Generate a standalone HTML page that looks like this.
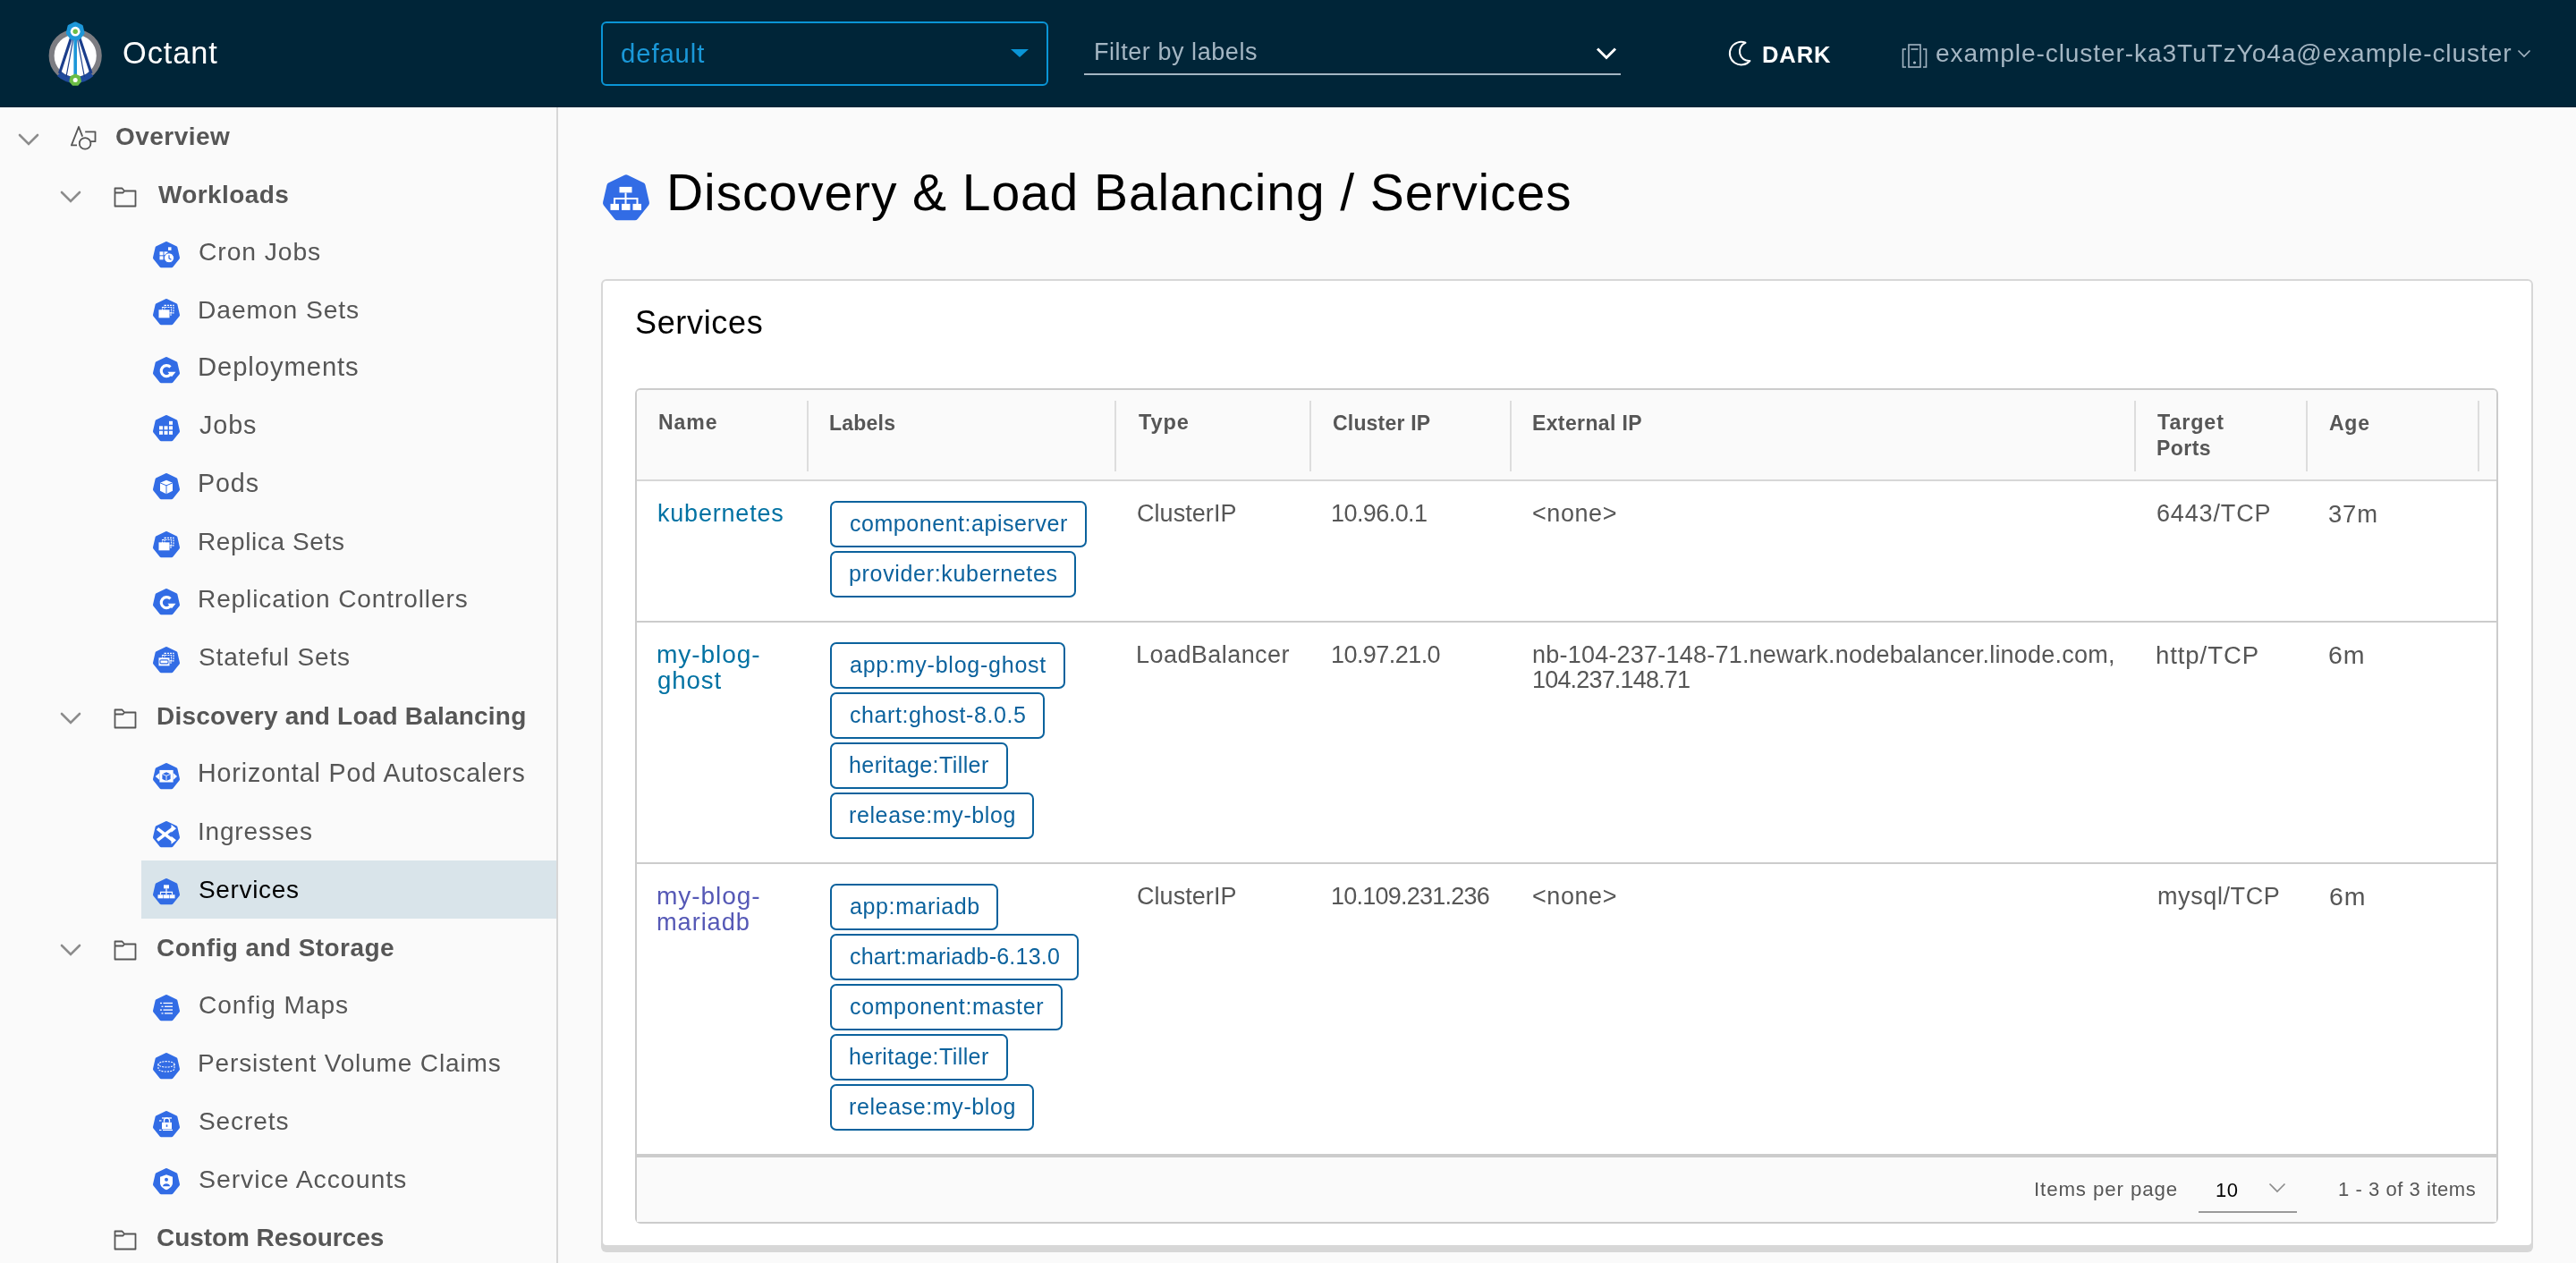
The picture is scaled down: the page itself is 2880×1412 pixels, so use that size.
<!DOCTYPE html>
<html><head><meta charset="utf-8"><title>Octant</title>
<style>
html,body{margin:0;padding:0;}
body{width:2880px;height:1412px;overflow:hidden;position:relative;background:#fafafa;font-family:"Liberation Sans",sans-serif;}
.t{position:absolute;white-space:nowrap;will-change:transform;}
svg{overflow:visible}
@media (max-width:2000px){html{zoom:0.5}}
</style></head><body>
<div style="position:absolute;left:0px;top:0px;width:2880px;height:120px;background:#002538"></div>
<svg style="position:absolute;left:54px;top:22px" width="60" height="76" viewBox="0 0 60 76">
<circle cx="30.2" cy="40.3" r="26.6" fill="#fff" stroke="#7d7d82" stroke-width="6"/>
<path d="M 12.2 60.5 A 26.6 26.6 0 0 0 48.2 60.5" fill="none" stroke="#1f4a9c" stroke-width="6.5"/>
<line x1="27" y1="16" x2="12.5" y2="60" stroke="#1b3e8c" stroke-width="3.2"/>
<line x1="33.4" y1="16" x2="48" y2="60" stroke="#1b3e8c" stroke-width="3.2"/>
<line x1="28.5" y1="18" x2="20" y2="64" stroke="#1b3e8c" stroke-width="1.2"/>
<line x1="31.9" y1="18" x2="40.4" y2="64" stroke="#1b3e8c" stroke-width="1.2"/>
<line x1="30.2" y1="14" x2="30.2" y2="66" stroke="#1d97d8" stroke-width="3.6"/>
<polygon points="30.20,4.40 36.92,7.64 38.58,14.91 33.93,20.75 26.47,20.75 21.82,14.91 23.48,7.64" fill="#1d97d8" stroke="#1d97d8" stroke-width="4" stroke-linejoin="round"/>
<circle cx="30.2" cy="13.2" r="5.4" fill="#fff"/>
<circle cx="30.2" cy="13.2" r="2.7" fill="#6bbd45"/>
<polygon points="30.20,62.10 34.42,64.13 35.46,68.70 32.54,72.37 27.86,72.37 24.94,68.70 25.98,64.13" fill="#6bbd45" stroke="#6bbd45" stroke-width="3" stroke-linejoin="round"/>
<circle cx="30.2" cy="67.5" r="2.5" fill="#fff"/>
</svg>
<div class="t" style="left:137.45px;top:42.41px;font-size:34.37px;line-height:34.37px;color:#ffffff;letter-spacing:0.9px;">Octant</div>
<div style="position:absolute;left:672px;top:24px;width:500px;height:72px;box-sizing:border-box;border:2px solid #0a95d6;border-radius:6px"></div>
<div class="t" style="left:693.83px;top:45.19px;font-size:29.31px;line-height:29.31px;color:#1a98d8;letter-spacing:0.9px;">default</div>
<svg style="position:absolute;left:1128px;top:53px" width="24" height="13" viewBox="0 0 24 13"><polygon points="2,2 22,2 12,11" fill="#0a95d6"/></svg>
<div class="t" style="left:1223.24px;top:45.04px;font-size:27px;line-height:27px;color:#a4b6c3;letter-spacing:0.559px;">Filter by labels</div>
<div style="position:absolute;left:1212px;top:82px;width:600px;height:2px;background:#a4b6c3"></div>
<svg style="position:absolute;left:1782px;top:50px" width="28" height="20" viewBox="0 0 28 20"><polyline points="4,4.5 14,14.5 24,4.5" fill="none" stroke="#fff" stroke-width="3"/></svg>
<svg style="position:absolute;left:1930px;top:44px" width="30" height="32" viewBox="0 0 30 32"><path d="M 21.5 3.8 A 12.8 12.8 0 1 0 26.4 24 A 10.5 10.5 0 0 1 21.5 3.8 Z" fill="none" stroke="#fff" stroke-width="2" stroke-linejoin="round"/></svg>
<div class="t" style="left:1970.34px;top:49.14px;font-size:25.59px;line-height:25.59px;color:#ffffff;font-weight:700;letter-spacing:0.9px;">DARK</div>
<svg style="position:absolute;left:2126px;top:48.5px" width="29" height="28" viewBox="0 0 29 28"><rect x="8" y="1" width="13" height="25" fill="none" stroke="#a4b6c3" stroke-width="1.6"/>
<line x1="10.5" y1="6" x2="18.5" y2="6" stroke="#a4b6c3" stroke-width="1.6"/>
<circle cx="14.5" cy="21" r="1.6" fill="#a4b6c3"/>
<polyline points="5,6 1.5,6 1.5,26 5,26" fill="none" stroke="#a4b6c3" stroke-width="1.6"/>
<polyline points="24,6 27.5,6 27.5,26 24,26" fill="none" stroke="#a4b6c3" stroke-width="1.6"/></svg>
<div class="t" style="left:2163.88px;top:46.21px;font-size:28.1px;line-height:28.1px;color:#a4b6c3;letter-spacing:0.9px;">example-cluster-ka3TuTzYo4a@example-cluster</div>
<svg style="position:absolute;left:2813px;top:54px" width="18" height="12" viewBox="0 0 18 12"><polyline points="2.5,2.5 9,9 15.5,2.5" fill="none" stroke="#a4b6c3" stroke-width="1.6"/></svg>
<div style="position:absolute;left:0px;top:120px;width:622px;height:1292px;background:#fafafa"></div>
<div style="position:absolute;left:622px;top:120px;width:2px;height:1292px;background:#d7d7d7"></div>
<div style="position:absolute;left:158px;top:962.4px;width:464px;height:64.8px;background:#d9e4ea"></div>
<svg style="position:absolute;left:19px;top:146.8px" width="26" height="18" viewBox="0 0 26 18"><polyline points="3,4 13,14 23,4" fill="none" stroke="#8c8c8c" stroke-width="2.6" stroke-linecap="round"/></svg>
<svg style="position:absolute;left:77px;top:140.4px" width="34" height="32" viewBox="0 0 34 32"><path d="M9 22.4 L2.9 22.4 L11 1.8 L15.2 12.6" fill="none" stroke="#565656" stroke-width="1.8" stroke-linejoin="round"/><polyline points="18.2,7.3 29.5,7.3 29.5,18.2 24.8,18.2" fill="none" stroke="#565656" stroke-width="1.8" stroke-linejoin="round"/><circle cx="18.1" cy="20.4" r="6.3" fill="none" stroke="#565656" stroke-width="1.8"/></svg>
<div class="t" style="left:128.88px;top:138.90px;font-size:28px;line-height:28px;color:#565656;font-weight:700;letter-spacing:0.474px;">Overview</div>
<svg style="position:absolute;left:66px;top:210.60000000000002px" width="26" height="18" viewBox="0 0 26 18"><polyline points="3,4 13,14 23,4" fill="none" stroke="#8c8c8c" stroke-width="2.6" stroke-linecap="round"/></svg>
<svg style="position:absolute;left:127px;top:207.60000000000002px" width="26" height="24" viewBox="0 0 26 24"><path d="M1.5 2.5 H9.5 L12 5.5 H24.5 V22.5 H1.5 Z M1.5 7.5 H10.5 L12 5.5" fill="none" stroke="#565656" stroke-width="1.8" stroke-linejoin="round"/></svg>
<div class="t" style="left:176.60px;top:203.70px;font-size:28px;line-height:28px;color:#565656;font-weight:700;letter-spacing:0.395px;">Workloads</div>
<svg style="position:absolute;left:170px;top:268.629835px" width="31" height="31" viewBox="0 0 31 31"><g transform="translate(16.00,16.33)"><polygon points="0.00,-13.33 10.42,-8.31 13.00,2.97 5.78,12.01 -5.78,12.01 -13.00,2.97 -10.42,-8.31" fill="#326ce5" stroke="#326ce5" stroke-width="4.0" stroke-linejoin="round"/><rect x="-7.5" y="-4" width="4" height="4" fill="#fff"/><rect x="-7.5" y="1" width="4" height="4" fill="#fff"/><rect x="-2.5" y="-4" width="4" height="4" fill="#fff"/><rect x="2" y="-9" width="3.5" height="3.5" fill="#fff"/><circle cx="3" cy="3" r="5.5" fill="#fff" stroke="#326ce5" stroke-width="1"/><polyline points="3,0 3,3.5 5.5,5" fill="none" stroke="#326ce5" stroke-width="1.2"/></g></svg>
<div class="t" style="left:222.28px;top:267.44px;font-size:28.31px;line-height:28.31px;color:#565656;letter-spacing:0.9px;">Cron Jobs</div>
<svg style="position:absolute;left:170px;top:333.42983499999997px" width="31" height="31" viewBox="0 0 31 31"><g transform="translate(16.00,16.33)"><polygon points="0.00,-13.33 10.42,-8.31 13.00,2.97 5.78,12.01 -5.78,12.01 -13.00,2.97 -10.42,-8.31" fill="#326ce5" stroke="#326ce5" stroke-width="4.0" stroke-linejoin="round"/><rect x="-2" y="-8" width="10" height="8.5" fill="none" stroke="#fff" stroke-width="1.1" stroke-dasharray="2 1"/><rect x="-4.5" y="-5.8" width="10" height="8.5" fill="none" stroke="#fff" stroke-width="1.1" stroke-dasharray="2 1"/><rect x="-8.5" y="-3" width="12" height="9" fill="#fff"/></g></svg>
<div class="t" style="left:221.44px;top:332.26px;font-size:28.28px;line-height:28.28px;color:#565656;letter-spacing:0.9px;">Daemon Sets</div>
<svg style="position:absolute;left:170px;top:398.229835px" width="31" height="31" viewBox="0 0 31 31"><g transform="translate(16.00,16.33)"><polygon points="0.00,-13.33 10.42,-8.31 13.00,2.97 5.78,12.01 -5.78,12.01 -13.00,2.97 -10.42,-8.31" fill="#326ce5" stroke="#326ce5" stroke-width="4.0" stroke-linejoin="round"/><path d="M 5.8 2.5 A 6 6 0 1 1 4.5 -4" fill="none" stroke="#fff" stroke-width="3.2"/><polygon points="1.5,1.5 10.5,1.5 6,7" fill="#fff"/></g></svg>
<div class="t" style="left:221.36px;top:396.24px;font-size:29.25px;line-height:29.25px;color:#565656;letter-spacing:0.9px;">Deployments</div>
<svg style="position:absolute;left:170px;top:463.029835px" width="31" height="31" viewBox="0 0 31 31"><g transform="translate(16.00,16.33)"><polygon points="0.00,-13.33 10.42,-8.31 13.00,2.97 5.78,12.01 -5.78,12.01 -13.00,2.97 -10.42,-8.31" fill="#326ce5" stroke="#326ce5" stroke-width="4.0" stroke-linejoin="round"/><rect x="-8.0" y="-3.0" width="4" height="4" fill="#fff"/><rect x="-2.5" y="-3.0" width="4" height="4" fill="#fff"/><rect x="3.0" y="-3.0" width="4" height="4" fill="#fff"/><rect x="-8.0" y="2.5" width="4" height="4" fill="#fff"/><rect x="-2.5" y="2.5" width="4" height="4" fill="#fff"/><rect x="3.0" y="2.5" width="4" height="4" fill="#fff"/><rect x="3" y="-8.5" width="4" height="4" fill="#fff"/></g></svg>
<div class="t" style="left:223.27px;top:461.43px;font-size:28.79px;line-height:28.79px;color:#565656;letter-spacing:0.9px;">Jobs</div>
<svg style="position:absolute;left:170px;top:527.8298349999999px" width="31" height="31" viewBox="0 0 31 31"><g transform="translate(16.00,16.33)"><polygon points="0.00,-13.33 10.42,-8.31 13.00,2.97 5.78,12.01 -5.78,12.01 -13.00,2.97 -10.42,-8.31" fill="#326ce5" stroke="#326ce5" stroke-width="4.0" stroke-linejoin="round"/><polygon points="0,-7.5 7,-4.5 7,4.5 0,8 -7,4.5 -7,-4.5" fill="#fff"/><polyline points="-7,-4.5 0,-1.5 7,-4.5" fill="none" stroke="#326ce5" stroke-width="1"/><line x1="0" y1="-1.5" x2="0" y2="8" stroke="#326ce5" stroke-width="1"/></g></svg>
<div class="t" style="left:221.41px;top:526.32px;font-size:28.68px;line-height:28.68px;color:#565656;letter-spacing:0.9px;">Pods</div>
<svg style="position:absolute;left:170px;top:592.6298349999998px" width="31" height="31" viewBox="0 0 31 31"><g transform="translate(16.00,16.33)"><polygon points="0.00,-13.33 10.42,-8.31 13.00,2.97 5.78,12.01 -5.78,12.01 -13.00,2.97 -10.42,-8.31" fill="#326ce5" stroke="#326ce5" stroke-width="4.0" stroke-linejoin="round"/><rect x="-2" y="-8" width="10" height="8.5" fill="none" stroke="#fff" stroke-width="1.1" stroke-dasharray="2 1"/><rect x="-4.5" y="-5.8" width="10" height="8.5" fill="none" stroke="#fff" stroke-width="1.1" stroke-dasharray="2 1"/><rect x="-8.5" y="-3" width="12" height="9" fill="#fff"/></g></svg>
<div class="t" style="left:221.46px;top:591.70px;font-size:28px;line-height:28px;color:#565656;letter-spacing:0.609px;">Replica Sets</div>
<svg style="position:absolute;left:170px;top:657.4298349999999px" width="31" height="31" viewBox="0 0 31 31"><g transform="translate(16.00,16.33)"><polygon points="0.00,-13.33 10.42,-8.31 13.00,2.97 5.78,12.01 -5.78,12.01 -13.00,2.97 -10.42,-8.31" fill="#326ce5" stroke="#326ce5" stroke-width="4.0" stroke-linejoin="round"/><path d="M 5.8 2.5 A 6 6 0 1 1 4.5 -4" fill="none" stroke="#fff" stroke-width="3.2"/><polygon points="1.5,1.5 10.5,1.5 6,7" fill="#fff"/></g></svg>
<div class="t" style="left:221.46px;top:656.48px;font-size:28.02px;line-height:28.02px;color:#565656;letter-spacing:0.9px;">Replication Controllers</div>
<svg style="position:absolute;left:170px;top:722.2298349999999px" width="31" height="31" viewBox="0 0 31 31"><g transform="translate(16.00,16.33)"><polygon points="0.00,-13.33 10.42,-8.31 13.00,2.97 5.78,12.01 -5.78,12.01 -13.00,2.97 -10.42,-8.31" fill="#326ce5" stroke="#326ce5" stroke-width="4.0" stroke-linejoin="round"/><rect x="-2" y="-8" width="10" height="8.5" fill="none" stroke="#fff" stroke-width="1.1" stroke-dasharray="2 1"/><rect x="-4.5" y="-5.8" width="10" height="8.5" fill="none" stroke="#fff" stroke-width="1.1" stroke-dasharray="2 1"/><rect x="-8.5" y="-3" width="12" height="9" fill="#fff"/><rect x="-7" y="-0.5" width="9" height="4" rx="1" fill="none" stroke="#326ce5" stroke-width="1.1"/></g></svg>
<div class="t" style="left:222.44px;top:721.30px;font-size:28px;line-height:28px;color:#565656;letter-spacing:0.857px;">Stateful Sets</div>
<svg style="position:absolute;left:66px;top:793.8px" width="26" height="18" viewBox="0 0 26 18"><polyline points="3,4 13,14 23,4" fill="none" stroke="#8c8c8c" stroke-width="2.6" stroke-linecap="round"/></svg>
<svg style="position:absolute;left:127px;top:790.8px" width="26" height="24" viewBox="0 0 26 24"><path d="M1.5 2.5 H9.5 L12 5.5 H24.5 V22.5 H1.5 Z M1.5 7.5 H10.5 L12 5.5" fill="none" stroke="#565656" stroke-width="1.8" stroke-linejoin="round"/></svg>
<div class="t" style="left:174.78px;top:786.90px;font-size:28px;line-height:28px;color:#565656;font-weight:700;letter-spacing:0.206px;">Discovery and Load Balancing</div>
<svg style="position:absolute;left:170px;top:851.8298349999999px" width="31" height="31" viewBox="0 0 31 31"><g transform="translate(16.00,16.33)"><polygon points="0.00,-13.33 10.42,-8.31 13.00,2.97 5.78,12.01 -5.78,12.01 -13.00,2.97 -10.42,-8.31" fill="#326ce5" stroke="#326ce5" stroke-width="4.0" stroke-linejoin="round"/><rect x="-7.6" y="-7.4" width="15.2" height="13.6" fill="#fff"/><polygon points="0,-5 4.6,-3 4.6,2.6 0,4.6 -4.6,2.6 -4.6,-3" fill="#326ce5"/><polyline points="-4.6,-3 0,-1 4.6,-3" fill="none" stroke="#fff" stroke-width="0.9"/><line x1="0" y1="-1" x2="0" y2="4.6" stroke="#fff" stroke-width="0.9"/><polygon points="-12.3,-0.4 -7.6,-4.4 -7.6,3.6" fill="#fff"/><polygon points="12,-0.4 7.6,-4.4 7.6,3.6" fill="#fff"/></g></svg>
<div class="t" style="left:221.41px;top:850.39px;font-size:28.6px;line-height:28.6px;color:#565656;letter-spacing:0.9px;">Horizontal Pod Autoscalers</div>
<svg style="position:absolute;left:170px;top:916.6298349999998px" width="31" height="31" viewBox="0 0 31 31"><g transform="translate(16.00,16.33)"><polygon points="0.00,-13.33 10.42,-8.31 13.00,2.97 5.78,12.01 -5.78,12.01 -13.00,2.97 -10.42,-8.31" fill="#326ce5" stroke="#326ce5" stroke-width="4.0" stroke-linejoin="round"/><line x1="-10" y1="-7" x2="7" y2="6" stroke="#fff" stroke-width="3.6"/><line x1="-10" y1="6" x2="7" y2="-7" stroke="#fff" stroke-width="3.6"/><polygon points="11,-7 5.5,-11.5 5.5,-2.5" fill="#fff"/><polygon points="11,6 5.5,1.5 5.5,10.5" fill="#fff"/></g></svg>
<div class="t" style="left:221.18px;top:915.70px;font-size:28px;line-height:28px;color:#565656;letter-spacing:0.815px;">Ingresses</div>
<svg style="position:absolute;left:170px;top:981.4298349999999px" width="31" height="31" viewBox="0 0 31 31"><g transform="translate(16.00,16.33)"><polygon points="0.00,-13.33 10.42,-8.31 13.00,2.97 5.78,12.01 -5.78,12.01 -13.00,2.97 -10.42,-8.31" fill="#326ce5" stroke="#326ce5" stroke-width="4.0" stroke-linejoin="round"/><rect x="-3" y="-8" width="6" height="4" fill="#fff"/><line x1="0" y1="-4" x2="0" y2="0" stroke="#fff" stroke-width="1.2"/><polyline points="-6.5,3 -6.5,0 6.5,0 6.5,3" fill="none" stroke="#fff" stroke-width="1.2"/><line x1="0" y1="0" x2="0" y2="3" stroke="#fff" stroke-width="1.2"/><rect x="-9.5" y="3" width="6" height="4" fill="#fff"/><rect x="-3" y="3" width="6" height="4" fill="#fff"/><rect x="3.5" y="3" width="6" height="4" fill="#fff"/></g></svg>
<div class="t" style="left:222.44px;top:980.50px;font-size:28px;line-height:28px;color:#000;letter-spacing:0.651px;">Services</div>
<svg style="position:absolute;left:66px;top:1053.0px" width="26" height="18" viewBox="0 0 26 18"><polyline points="3,4 13,14 23,4" fill="none" stroke="#8c8c8c" stroke-width="2.6" stroke-linecap="round"/></svg>
<svg style="position:absolute;left:127px;top:1050.0px" width="26" height="24" viewBox="0 0 26 24"><path d="M1.5 2.5 H9.5 L12 5.5 H24.5 V22.5 H1.5 Z M1.5 7.5 H10.5 L12 5.5" fill="none" stroke="#565656" stroke-width="1.8" stroke-linejoin="round"/></svg>
<div class="t" style="left:175.48px;top:1046.10px;font-size:28px;line-height:28px;color:#565656;font-weight:700;letter-spacing:0.432px;">Config and Storage</div>
<svg style="position:absolute;left:170px;top:1111.029835px" width="31" height="31" viewBox="0 0 31 31"><g transform="translate(16.00,16.33)"><polygon points="0.00,-13.33 10.42,-8.31 13.00,2.97 5.78,12.01 -5.78,12.01 -13.00,2.97 -10.42,-8.31" fill="#326ce5" stroke="#326ce5" stroke-width="4.0" stroke-linejoin="round"/><rect x="-7.0" y="-6.5" width="2" height="1.3" fill="#fff"/><rect x="-3.5" y="-6.5" width="10.5" height="1.3" fill="#fff"/><rect x="-5.5" y="-2.7" width="2" height="1.3" fill="#fff"/><rect x="-2.0" y="-2.7" width="9.0" height="1.3" fill="#fff"/><rect x="-7.0" y="1.1" width="2" height="1.3" fill="#fff"/><rect x="-3.5" y="1.1" width="10.5" height="1.3" fill="#fff"/><rect x="-5.5" y="4.9" width="2" height="1.3" fill="#fff"/><rect x="-2.0" y="4.9" width="9.0" height="1.3" fill="#fff"/></g></svg>
<div class="t" style="left:222.29px;top:1109.96px;font-size:28.16px;line-height:28.16px;color:#565656;letter-spacing:0.9px;">Config Maps</div>
<svg style="position:absolute;left:170px;top:1175.829835px" width="31" height="31" viewBox="0 0 31 31"><g transform="translate(16.00,16.33)"><polygon points="0.00,-13.33 10.42,-8.31 13.00,2.97 5.78,12.01 -5.78,12.01 -13.00,2.97 -10.42,-8.31" fill="#326ce5" stroke="#326ce5" stroke-width="4.0" stroke-linejoin="round"/><ellipse cx="0" cy="-2.5" rx="9" ry="3.2" fill="none" stroke="#fff" stroke-width="1.1" stroke-dasharray="2 1.2"/><path d="M-9 -2.5 V 2.5 A 9 3.2 0 0 0 9 2.5 V -2.5" fill="none" stroke="#fff" stroke-width="1.1" stroke-dasharray="2 1.2"/></g></svg>
<div class="t" style="left:221.46px;top:1174.90px;font-size:28px;line-height:28px;color:#565656;letter-spacing:0.855px;">Persistent Volume Claims</div>
<svg style="position:absolute;left:170px;top:1240.629835px" width="31" height="31" viewBox="0 0 31 31"><g transform="translate(16.00,16.33)"><polygon points="0.00,-13.33 10.42,-8.31 13.00,2.97 5.78,12.01 -5.78,12.01 -13.00,2.97 -10.42,-8.31" fill="#326ce5" stroke="#326ce5" stroke-width="4.0" stroke-linejoin="round"/><rect x="-5" y="-8" width="11" height="1.3" fill="#fff"/><path d="M-2.5 -2.5 V -4.5 A 3 3 0 0 1 3.5 -4.5 V -2.5" fill="none" stroke="#fff" stroke-width="1.4"/><rect x="-5" y="-2.5" width="11" height="7.5" fill="#fff"/><rect x="-0.3" y="0" width="1.6" height="2.5" fill="#326ce5"/><rect x="-8" y="-5" width="2.5" height="1.2" fill="#fff"/><rect x="-8" y="5.5" width="2.5" height="1.2" fill="#fff"/><rect x="-4" y="5.5" width="11" height="1.2" fill="#fff"/></g></svg>
<div class="t" style="left:222.44px;top:1239.64px;font-size:28.07px;line-height:28.07px;color:#565656;letter-spacing:0.9px;">Secrets</div>
<svg style="position:absolute;left:170px;top:1305.429835px" width="31" height="31" viewBox="0 0 31 31"><g transform="translate(16.00,16.33)"><polygon points="0.00,-13.33 10.42,-8.31 13.00,2.97 5.78,12.01 -5.78,12.01 -13.00,2.97 -10.42,-8.31" fill="#326ce5" stroke="#326ce5" stroke-width="4.0" stroke-linejoin="round"/><path d="M0 -8 L7 -5.5 V 1 C 7 5, 3.5 7.5, 0 9 C -3.5 7.5, -7 5, -7 1 V -5.5 Z" fill="#fff"/><circle cx="0" cy="-2.5" r="2" fill="#326ce5"/><path d="M-4 5 C -4 1, 4 1, 4 5 Z" fill="#326ce5"/></g></svg>
<div class="t" style="left:222.42px;top:1304.06px;font-size:28.52px;line-height:28.52px;color:#565656;letter-spacing:0.9px;">Service Accounts</div>
<svg style="position:absolute;left:127px;top:1374.0000000000002px" width="26" height="24" viewBox="0 0 26 24"><path d="M1.5 2.5 H9.5 L12 5.5 H24.5 V22.5 H1.5 Z M1.5 7.5 H10.5 L12 5.5" fill="none" stroke="#565656" stroke-width="1.8" stroke-linejoin="round"/></svg>
<div class="t" style="left:175.48px;top:1370.10px;font-size:28px;line-height:28px;color:#565656;font-weight:700;letter-spacing:-0.065px;">Custom Resources</div>
<div style="position:absolute;left:624px;top:120px;width:2256px;height:1292px;background:#fafafa"></div>
<svg style="position:absolute;left:670px;top:191px" width="60" height="60" viewBox="0 0 60 60"><g transform="translate(30,30.9)"><polygon points="0.00,-22.56 17.64,-14.07 21.99,5.02 9.79,20.33 -9.79,20.33 -21.99,5.02 -17.64,-14.07" fill="#326ce5" stroke="#326ce5" stroke-width="8" stroke-linejoin="round"/><rect x="-7.5" y="-13" width="14" height="6.5" fill="#fff"/><line x1="-0.5" y1="-6.5" x2="-0.5" y2="6" stroke="#fff" stroke-width="2"/><polyline points="-13,6 -13,0 12.5,0 12.5,6" fill="none" stroke="#fff" stroke-width="2"/><rect x="-17.5" y="6" width="9.5" height="7" fill="#fff"/><rect x="-5" y="6" width="9.5" height="7" fill="#fff"/><rect x="7.5" y="6" width="9.5" height="7" fill="#fff"/></g></svg>
<div class="t" style="left:744.64px;top:187.22px;font-size:57.03px;line-height:57.03px;color:#000;letter-spacing:0.9px;">Discovery &amp; Load Balancing / Services</div>
<div style="position:absolute;left:672px;top:312px;width:2160px;height:1082px;box-sizing:border-box;background:#fff;border:2px solid #d7d7d7;border-radius:6px;box-shadow:0 6px 0 0 #d7d7d7"></div>
<div class="t" style="left:710.18px;top:343.33px;font-size:36px;line-height:36px;color:#000;letter-spacing:0.66px;">Services</div>
<div style="position:absolute;left:710px;top:434px;width:2083px;height:934px;box-sizing:border-box;border:2px solid #cccccc;border-radius:6px;background:#fff;overflow:hidden"></div>
<div style="position:absolute;left:712px;top:436px;width:2079px;height:100px;background:#fafafa;border-radius:4px 4px 0 0"></div>
<div style="position:absolute;left:712px;top:536px;width:2079px;height:2px;background:#d7d7d7"></div>
<div style="position:absolute;left:902px;top:448px;width:2px;height:79px;background:#dddddd"></div>
<div style="position:absolute;left:1246px;top:448px;width:2px;height:79px;background:#dddddd"></div>
<div style="position:absolute;left:1464px;top:448px;width:2px;height:79px;background:#dddddd"></div>
<div style="position:absolute;left:1688px;top:448px;width:2px;height:79px;background:#dddddd"></div>
<div style="position:absolute;left:2386px;top:448px;width:2px;height:79px;background:#dddddd"></div>
<div style="position:absolute;left:2578px;top:448px;width:2px;height:79px;background:#dddddd"></div>
<div style="position:absolute;left:2770px;top:448px;width:2px;height:79px;background:#dddddd"></div>
<div class="t" style="left:735.70px;top:461.49px;font-size:23.05px;line-height:23.05px;color:#565656;font-weight:700;letter-spacing:0.9px;">Name</div>
<div class="t" style="left:927.00px;top:461.53px;font-size:23px;line-height:23px;color:#565656;font-weight:700;letter-spacing:0.224px;">Labels</div>
<div class="t" style="left:1272.66px;top:461.05px;font-size:23.57px;line-height:23.57px;color:#565656;font-weight:700;letter-spacing:0.9px;">Type</div>
<div class="t" style="left:1489.68px;top:461.53px;font-size:23px;line-height:23px;color:#565656;font-weight:700;letter-spacing:0.191px;">Cluster IP</div>
<div class="t" style="left:1713.01px;top:461.53px;font-size:23px;line-height:23px;color:#565656;font-weight:700;letter-spacing:0.369px;">External IP</div>
<div class="t" style="left:2412.47px;top:461.29px;font-size:23.28px;line-height:23.28px;color:#565656;font-weight:700;letter-spacing:0.9px;">Target</div>
<div class="t" style="left:2604.23px;top:461.53px;font-size:23px;line-height:23px;color:#565656;font-weight:700;letter-spacing:0.755px;">Age</div>
<div class="t" style="left:2411.20px;top:489.53px;font-size:23px;line-height:23px;color:#565656;font-weight:700;letter-spacing:0.438px;">Ports</div>
<div style="position:absolute;left:712px;top:694px;width:2079px;height:2px;background:#cccccc"></div>
<div style="position:absolute;left:712px;top:964px;width:2079px;height:2px;background:#cccccc"></div>
<div style="position:absolute;left:712px;top:1290px;width:2079px;height:4px;background:#cccccc"></div>
<div style="position:absolute;left:712px;top:1294px;width:2079px;height:72px;background:#fafafa"></div>
<div class="t" style="left:735.35px;top:561.14px;font-size:27px;line-height:27px;color:#0072a3;letter-spacing:0.794px;">kubernetes</div>
<div style="position:absolute;left:928.3px;top:560px;width:286.4px;height:52px;box-sizing:border-box;border:2px solid #0b629d;border-radius:7px"></div>
<div class="t" style="left:949.90px;top:572.94px;font-size:25px;line-height:25px;color:#0b629d;letter-spacing:0.544px;">component:apiserver</div>
<div style="position:absolute;left:928.3px;top:616px;width:275.2px;height:52px;box-sizing:border-box;border:2px solid #0b629d;border-radius:7px"></div>
<div class="t" style="left:949.27px;top:628.94px;font-size:25px;line-height:25px;color:#0b629d;letter-spacing:0.672px;">provider:kubernetes</div>
<div class="t" style="left:1271.25px;top:561.14px;font-size:27px;line-height:27px;color:#565656;letter-spacing:0.054px;">ClusterIP</div>
<div class="t" style="left:1487.97px;top:561.14px;font-size:27px;line-height:27px;color:#565656;letter-spacing:-0.569px;">10.96.0.1</div>
<div class="t" style="left:1713.06px;top:561.14px;font-size:27px;line-height:27px;color:#565656;letter-spacing:0.567px;">&lt;none&gt;</div>
<div class="t" style="left:2410.85px;top:561.14px;font-size:27px;line-height:27px;color:#565656;letter-spacing:0.857px;">6443/TCP</div>
<div class="t" style="left:2603.40px;top:560.81px;font-size:27.39px;line-height:27.39px;color:#565656;letter-spacing:0.9px;">37m</div>
<div class="t" style="left:734.27px;top:718.20px;font-size:28.12px;line-height:28.12px;color:#0072a3;letter-spacing:0.9px;">my-blog-</div>
<div class="t" style="left:735.00px;top:746.62px;font-size:27.62px;line-height:27.62px;color:#0072a3;letter-spacing:0.9px;">ghost</div>
<div style="position:absolute;left:928.3px;top:718px;width:262.7px;height:52px;box-sizing:border-box;border:2px solid #0b629d;border-radius:7px"></div>
<div class="t" style="left:949.90px;top:730.94px;font-size:25px;line-height:25px;color:#0b629d;letter-spacing:0.764px;">app:my-blog-ghost</div>
<div style="position:absolute;left:928.3px;top:774px;width:239.5px;height:52px;box-sizing:border-box;border:2px solid #0b629d;border-radius:7px"></div>
<div class="t" style="left:949.90px;top:786.94px;font-size:25px;line-height:25px;color:#0b629d;letter-spacing:0.58px;">chart:ghost-8.0.5</div>
<div style="position:absolute;left:928.3px;top:830px;width:198.7px;height:52px;box-sizing:border-box;border:2px solid #0b629d;border-radius:7px"></div>
<div class="t" style="left:949.15px;top:842.94px;font-size:25px;line-height:25px;color:#0b629d;letter-spacing:0.409px;">heritage:Tiller</div>
<div style="position:absolute;left:928.3px;top:886px;width:227.8px;height:52px;box-sizing:border-box;border:2px solid #0b629d;border-radius:7px"></div>
<div class="t" style="left:949.27px;top:898.94px;font-size:25px;line-height:25px;color:#0b629d;letter-spacing:0.612px;">release:my-blog</div>
<div class="t" style="left:1270.44px;top:719.14px;font-size:27px;line-height:27px;color:#565656;letter-spacing:0.443px;">LoadBalancer</div>
<div class="t" style="left:1487.97px;top:719.14px;font-size:27px;line-height:27px;color:#565656;letter-spacing:-0.556px;">10.97.21.0</div>
<div class="t" style="left:1713.24px;top:719.14px;font-size:27px;line-height:27px;color:#565656;letter-spacing:0.219px;">nb-104-237-148-71.newark.nodebalancer.linode.com,</div>
<div class="t" style="left:1712.97px;top:747.14px;font-size:27px;line-height:27px;color:#565656;letter-spacing:-0.824px;">104.237.148.71</div>
<div class="t" style="left:2410.27px;top:718.65px;font-size:27.58px;line-height:27.58px;color:#565656;letter-spacing:0.9px;">http/TCP</div>
<div class="t" style="left:2603.07px;top:717.83px;font-size:28.55px;line-height:28.55px;color:#565656;letter-spacing:0.9px;">6m</div>
<div class="t" style="left:734.27px;top:988.20px;font-size:28.12px;line-height:28.12px;color:#5659b6;letter-spacing:0.9px;">my-blog-</div>
<div class="t" style="left:734.33px;top:1016.93px;font-size:27.25px;line-height:27.25px;color:#5659b6;letter-spacing:0.9px;">mariadb</div>
<div style="position:absolute;left:928.3px;top:988px;width:187.8px;height:52px;box-sizing:border-box;border:2px solid #0b629d;border-radius:7px"></div>
<div class="t" style="left:949.90px;top:1000.94px;font-size:25px;line-height:25px;color:#0b629d;letter-spacing:0.62px;">app:mariadb</div>
<div style="position:absolute;left:928.3px;top:1044px;width:277.5px;height:52px;box-sizing:border-box;border:2px solid #0b629d;border-radius:7px"></div>
<div class="t" style="left:949.90px;top:1056.94px;font-size:25px;line-height:25px;color:#0b629d;letter-spacing:0.218px;">chart:mariadb-6.13.0</div>
<div style="position:absolute;left:928.3px;top:1100px;width:259.7px;height:52px;box-sizing:border-box;border:2px solid #0b629d;border-radius:7px"></div>
<div class="t" style="left:949.90px;top:1112.94px;font-size:25px;line-height:25px;color:#0b629d;letter-spacing:0.632px;">component:master</div>
<div style="position:absolute;left:928.3px;top:1156px;width:198.7px;height:52px;box-sizing:border-box;border:2px solid #0b629d;border-radius:7px"></div>
<div class="t" style="left:949.15px;top:1168.94px;font-size:25px;line-height:25px;color:#0b629d;letter-spacing:0.409px;">heritage:Tiller</div>
<div style="position:absolute;left:928.3px;top:1212px;width:227.8px;height:52px;box-sizing:border-box;border:2px solid #0b629d;border-radius:7px"></div>
<div class="t" style="left:949.27px;top:1224.94px;font-size:25px;line-height:25px;color:#0b629d;letter-spacing:0.612px;">release:my-blog</div>
<div class="t" style="left:1271.25px;top:989.14px;font-size:27px;line-height:27px;color:#565656;letter-spacing:0.054px;">ClusterIP</div>
<div class="t" style="left:1487.97px;top:989.14px;font-size:27px;line-height:27px;color:#565656;letter-spacing:-0.757px;">10.109.231.236</div>
<div class="t" style="left:1713.06px;top:989.14px;font-size:27px;line-height:27px;color:#565656;letter-spacing:0.567px;">&lt;none&gt;</div>
<div class="t" style="left:2411.64px;top:989.14px;font-size:27px;line-height:27px;color:#565656;letter-spacing:0.601px;">mysql/TCP</div>
<div class="t" style="left:2603.58px;top:987.90px;font-size:28.47px;line-height:28.47px;color:#565656;letter-spacing:0.9px;">6m</div>
<div class="t" style="left:2273.50px;top:1319.16px;font-size:22.26px;line-height:22.26px;color:#565656;letter-spacing:0.9px;">Items per page</div>
<div class="t" style="left:2476.95px;top:1319.88px;font-size:22px;line-height:22px;color:#000;letter-spacing:0.5px;">10</div>
<div style="position:absolute;left:2458px;top:1354px;width:110px;height:2px;background:#9a9a9a"></div>
<svg style="position:absolute;left:2535px;top:1320px" width="22" height="16" viewBox="0 0 22 16"><polyline points="2.5,3.5 11,12 19.5,3.5" fill="none" stroke="#8c8c8c" stroke-width="1.6"/></svg>
<div class="t" style="left:2613.65px;top:1319.38px;font-size:22px;line-height:22px;color:#565656;letter-spacing:0.546px;">1 - 3 of 3 items</div>
</body></html>
